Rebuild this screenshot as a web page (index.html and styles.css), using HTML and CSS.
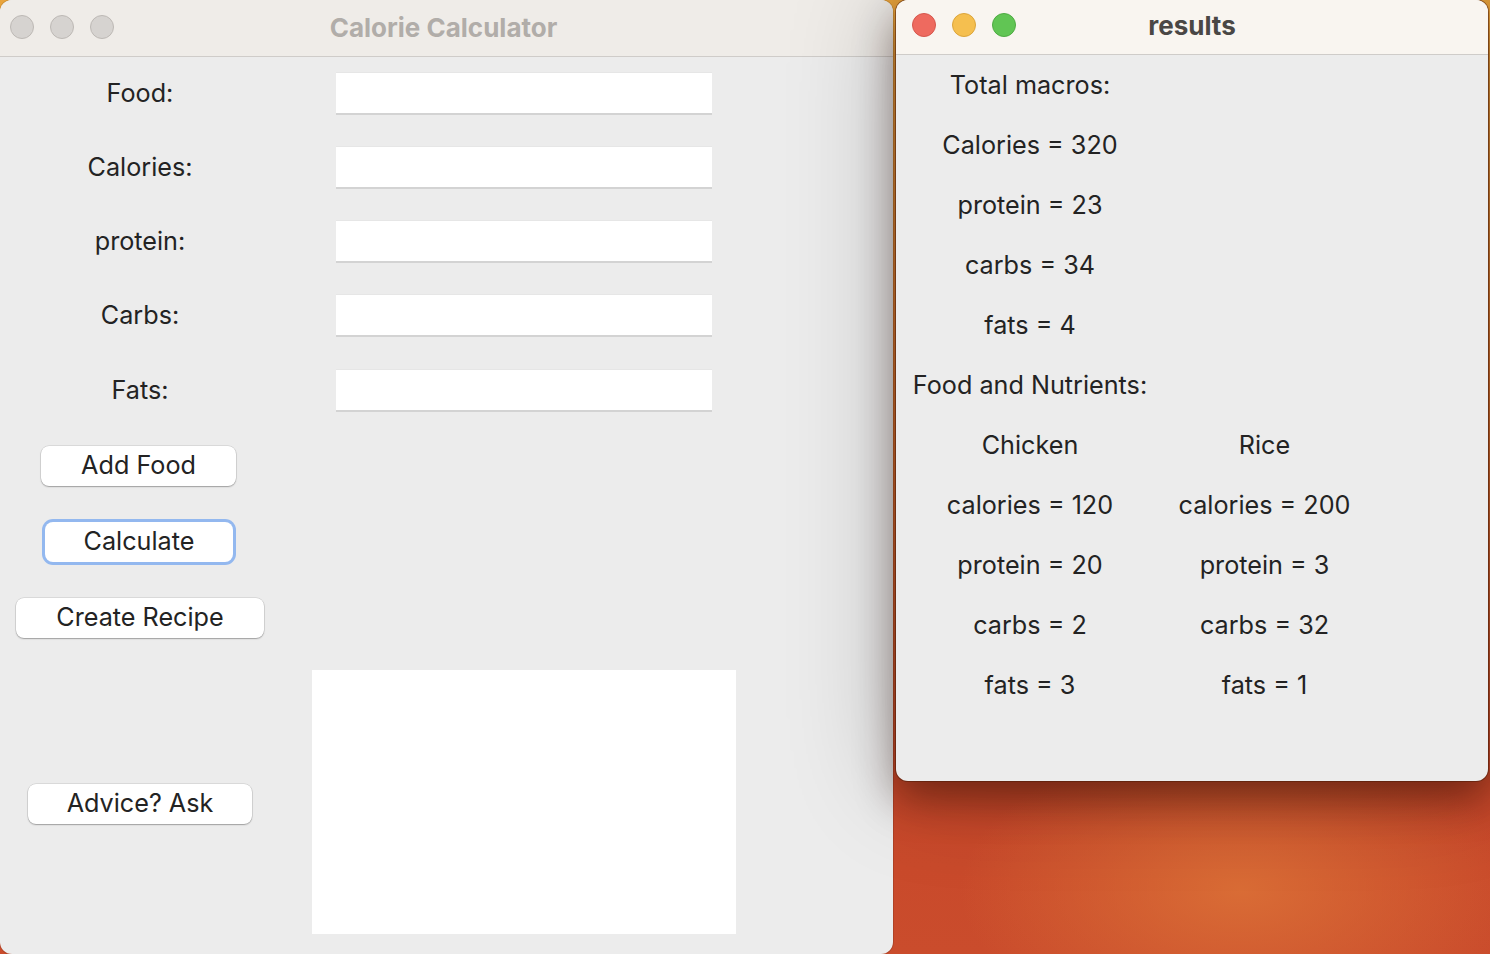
FILE: index.html
```html
<!DOCTYPE html>
<html>
<head>
<meta charset="utf-8">
<link rel="stylesheet" href="styles.css">
</head>
<body>
<div class="desktop">
  <div class="window win-main">
    <div class="titlebar tb-main">
      <div class="lights">
        <span class="light gray"></span><span class="light gray"></span><span class="light gray"></span>
      </div>
      <div class="title title-inactive">Calorie Calculator</div>
    </div>
    <div class="form">
      <div class="label">Food:</div><div class="cell"><div class="entry"></div></div>
      <div class="label">Calories:</div><div class="cell"><div class="entry"></div></div>
      <div class="label">protein:</div><div class="cell"><div class="entry"></div></div>
      <div class="label">Carbs:</div><div class="cell"><div class="entry"></div></div>
      <div class="label">Fats:</div><div class="cell"><div class="entry"></div></div>
      <div class="label"><div class="btn btn-add">Add Food</div></div><div class="cell"></div>
      <div class="label"><div class="btn btn-calc">Calculate</div></div><div class="cell"></div>
      <div class="label"><div class="btn btn-recipe">Create Recipe</div></div><div class="cell"></div>
      <div class="label"><div class="btn btn-advice">Advice? Ask</div></div><div class="cell cell-text"><div class="textbox"></div></div>
    </div>
  </div>

  <div class="window win-results">
    <div class="titlebar tb-results">
      <div class="lights">
        <span class="light red"></span><span class="light yellow"></span><span class="light green"></span>
      </div>
      <div class="title title-active">results</div>
    </div>
    <div class="results">
      <div class="r">Total macros:</div><div class="r"></div>
      <div class="r">Calories = 320</div><div class="r"></div>
      <div class="r">protein = 23</div><div class="r"></div>
      <div class="r">carbs = 34</div><div class="r"></div>
      <div class="r">fats = 4</div><div class="r"></div>
      <div class="r">Food and Nutrients:</div><div class="r"></div>
      <div class="r">Chicken</div><div class="r">Rice</div>
      <div class="r">calories = 120</div><div class="r">calories = 200</div>
      <div class="r">protein = 20</div><div class="r">protein = 3</div>
      <div class="r">carbs = 2</div><div class="r">carbs = 32</div>
      <div class="r">fats = 3</div><div class="r">fats = 1</div>
    </div>
  </div>
</div>
</body>
</html>
```

FILE: styles.css
```css
* { box-sizing: border-box; }
html, body { margin: 0; padding: 0; }
body {
  font-family: Inter, "Liberation Sans", sans-serif;
  color: #232323;
}
.desktop {
  position: relative;
  width: 1490px;
  height: 954px;
  overflow: hidden;
  background:
    radial-gradient(ellipse 280px 150px at 1240px 890px, rgba(218,110,54,0.95), rgba(218,110,54,0) 100%),
    linear-gradient(180deg, #e9a43c 0%, #d9742e 40%, #c8482a 82%, #ca4c2c 100%);
}
.window {
  position: absolute;
  top: 0;
  background: #ececec;
  overflow: hidden;
}
.win-main {
  left: 0;
  width: 893px;
  height: 954px;
  border-radius: 12px;
  box-shadow: 0 0 0 1px rgba(0,0,0,0.12);
}
.win-results {
  left: 896px;
  width: 592px;
  height: 781px;
  border-radius: 12px;
  box-shadow: 0 0 0 1px rgba(80,30,10,0.55), 0 18px 40px rgba(40,10,0,0.45), 0 0 110px rgba(0,0,0,0.24);
}
.titlebar {
  position: relative;
  display: flex;
  align-items: center;
  justify-content: center;
  border-bottom: 1px solid #cfccc9;
}
.tb-main { height: 57px; background: #efece8; }
.tb-results { height: 55px; background: #f9f5f0; }
.lights {
  position: absolute;
  left: 10px;
  top: 0;
  bottom: 0;
  display: flex;
  align-items: center;
  gap: 16px;
}
.tb-main .lights { padding-bottom: 2px; }
.tb-results .lights { left: 16px; padding-bottom: 4px; }
.light {
  width: 24px;
  height: 24px;
  border-radius: 50%;
  display: block;
}
.light.gray { background: #d6d3d0; border: 1px solid #bdb9b5; }
.light.red { background: #ee6a5f; border: 1px solid #d6574d; }
.light.yellow { background: #f5bf4f; border: 1px solid #dca53b; }
.light.green { background: #61c554; border: 1px solid #4fab43; }
.title {
  font-weight: 700;
  font-size: 26px;
}
.tb-main .title { margin-left: -6px; padding-bottom: 2px; }
.tb-results .title { padding-bottom: 4px; }
.title-inactive { color: #b1ada9; }
.title-active { color: #4a4745; }

.form {
  display: grid;
  grid-template-columns: 280px 488px;
  grid-template-rows: 73px 74px 74px 74px 76px 76px 76px 76px 297px;
  font-size: 25.2px;
}
.label {
  display: flex;
  align-items: center;
  justify-content: center;
  padding-bottom: 1px;
  white-space: nowrap;
}
.cell {
  display: flex;
  align-items: center;
  justify-content: center;
}
.entry {
  width: 376px;
  height: 43px;
  background: #fff;
  border-top: 1px solid #e6e6e6;
  border-bottom: 2px solid #d3d3d3;
}
.cell-text { align-items: flex-start; padding-top: 14px; }
.textbox {
  width: 424px;
  height: 264px;
  background: #fff;
}
.btn {
  height: 40px;
  background: #fff;
  border-radius: 8px;
  display: flex;
  align-items: center;
  justify-content: center;
  box-shadow: 0 0 0 0.5px rgba(0,0,0,0.15), 0 1px 1.5px rgba(0,0,0,0.28);
  padding-bottom: 2px;
}
.btn-add { width: 195px; margin-left: -3px; }
.btn-calc {
  width: 188px;
  height: 40px;
  margin-left: -2px;
  box-shadow: 0 0 0 3px #93b8ef, 0 1px 1.5px rgba(0,0,0,0.28);
  border-radius: 8px;
}
.btn-recipe { width: 248px; }
.btn-advice { width: 224px; }

.results {
  display: grid;
  grid-template-columns: 240px 229px;
  grid-auto-rows: 60px;
  padding-left: 14px;
  font-size: 25.2px;
}
.r {
  display: flex;
  align-items: center;
  justify-content: center;
  padding-bottom: 1px;
  white-space: nowrap;
}
```
